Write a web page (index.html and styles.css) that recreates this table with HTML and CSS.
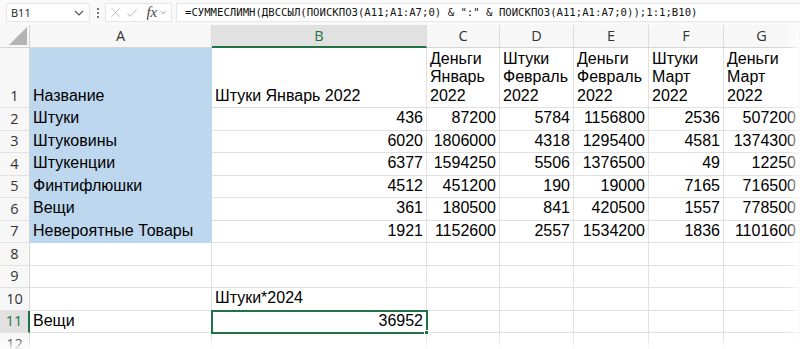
FILE: index.html
```html
<!DOCTYPE html>
<html lang="ru">
<head>
<meta charset="utf-8">
<title>Excel</title>
<link rel="stylesheet" href="styles.css">
</head>
<body>
<div class="app">
  <div class="fbar">
    <div class="namebox">
      <span class="nb-text">B11</span>
      <svg class="chev" width="10" height="6" viewBox="0 0 10 6"><path d="M1 1 L5 5 L9 1" fill="none" stroke="#555" stroke-width="1.2"/></svg>
    </div>
    <div class="dots"><span></span><span></span><span></span></div>
    <div class="fnbox">
      <svg class="ico-x" width="11" height="11" viewBox="0 0 11 11"><path d="M0.5 0.5 L10.5 10.5 M10.5 0.5 L0.5 10.5" stroke="#b5b5b5" stroke-width="1.1" fill="none"/></svg>
      <svg class="ico-ok" width="12" height="10" viewBox="0 0 12 10"><path d="M0.5 5.5 L4 9 L11.5 0.5" stroke="#b5b5b5" stroke-width="1.1" fill="none"/></svg>
      <span class="fx">fx</span>
      <svg class="chev small" width="8" height="5" viewBox="0 0 8 5"><path d="M1 1 L4 4 L7 1" fill="none" stroke="#888" stroke-width="1"/></svg>
    </div>
    <div class="formula">=СУММЕСЛИМН(ДВССЫЛ(ПОИСКПОЗ(A11;A1:A7;0) &amp; ":" &amp; ПОИСКПОЗ(A11;A1:A7;0));1:1;B10)</div>
  </div>

  <div class="sheet">
    <div class="corner"><svg width="18" height="18" viewBox="0 0 18 18"><path d="M18 0 L18 18 L0 18 Z" fill="#b4b4b4"/></svg></div>
    <div class="ch">A</div>
    <div class="ch sel">B</div>
    <div class="ch">C</div>
    <div class="ch">D</div>
    <div class="ch">E</div>
    <div class="ch">F</div>
    <div class="ch">G</div>

    <div class="rh tall">1</div>
    <div class="c blue">Название</div>
    <div class="c">Штуки Январь 2022</div>
    <div class="c wrap">Деньги Январь 2022</div>
    <div class="c wrap">Штуки Февраль 2022</div>
    <div class="c wrap">Деньги Февраль 2022</div>
    <div class="c wrap">Штуки Март 2022</div>
    <div class="c wrap">Деньги Март 2022</div>

    <div class="rh">2</div>
    <div class="c blue">Штуки</div>
    <div class="c n">436</div><div class="c n">87200</div><div class="c n">5784</div><div class="c n">1156800</div><div class="c n">2536</div><div class="c n">507200</div>

    <div class="rh">3</div>
    <div class="c blue">Штуковины</div>
    <div class="c n">6020</div><div class="c n">1806000</div><div class="c n">4318</div><div class="c n">1295400</div><div class="c n">4581</div><div class="c n">1374300</div>

    <div class="rh">4</div>
    <div class="c blue">Штукенции</div>
    <div class="c n">6377</div><div class="c n">1594250</div><div class="c n">5506</div><div class="c n">1376500</div><div class="c n">49</div><div class="c n">12250</div>

    <div class="rh">5</div>
    <div class="c blue">Финтифлюшки</div>
    <div class="c n">4512</div><div class="c n">451200</div><div class="c n">190</div><div class="c n">19000</div><div class="c n">7165</div><div class="c n">716500</div>

    <div class="rh">6</div>
    <div class="c blue">Вещи</div>
    <div class="c n">361</div><div class="c n">180500</div><div class="c n">841</div><div class="c n">420500</div><div class="c n">1557</div><div class="c n">778500</div>

    <div class="rh">7</div>
    <div class="c blue">Невероятные Товары</div>
    <div class="c n">1921</div><div class="c n">1152600</div><div class="c n">2557</div><div class="c n">1534200</div><div class="c n">1836</div><div class="c n">1101600</div>

    <div class="rh">8</div>
    <div class="c"></div><div class="c"></div><div class="c"></div><div class="c"></div><div class="c"></div><div class="c"></div><div class="c"></div>

    <div class="rh">9</div>
    <div class="c"></div><div class="c"></div><div class="c"></div><div class="c"></div><div class="c"></div><div class="c"></div><div class="c"></div>

    <div class="rh">10</div>
    <div class="c"></div><div class="c">Штуки*2024</div><div class="c"></div><div class="c"></div><div class="c"></div><div class="c"></div><div class="c"></div>

    <div class="rh sel">11</div>
    <div class="c">Вещи</div><div class="c n active">36952<span class="handle"></span></div><div class="c"></div><div class="c"></div><div class="c"></div><div class="c"></div><div class="c"></div>

    <div class="rh">12</div>
    <div class="c"></div><div class="c"></div><div class="c"></div><div class="c"></div><div class="c"></div><div class="c"></div><div class="c"></div>
  </div>
  <div class="fade-right"></div>
  <div class="fade-bottom"></div>
</div>
</body>
</html>
```

FILE: styles.css
```css
* { box-sizing: border-box; }
html, body { margin: 0; padding: 0; background: #fff; }
.app {
  position: relative;
  width: 800px;
  height: 349px;
  overflow: hidden;
  background: #fff;
}

/* formula bar */
.fbar {
  height: 25px;
  display: flex;
  align-items: center;
  padding: 2px 0 2px 6px;
  background: #f9f9f9;
}
.namebox {
  width: 84px;
  height: 19px;
  background: #fff;
  border: 1px solid #e6e6e6;
  display: flex;
  align-items: center;
  justify-content: space-between;
  padding: 0 5px 0 4px;
  font-family: "Open Sans", "Noto Sans", sans-serif;
  font-size: 11px;
  color: #222;
}
.chev { display: block; }
.dots {
  width: 15px;
  display: flex;
  flex-direction: column;
  align-items: center;
  gap: 2px;
}
.dots span { width: 2px; height: 2px; background: #777; display: block; }
.fnbox {
  width: 67px;
  height: 19px;
  background: #fff;
  border: 1px solid #e6e6e6;
  display: flex;
  align-items: center;
  padding: 0 4px 0 5px;
  gap: 7px;
}
.ico-x, .ico-ok { display: block; }
.fx {
  font-family: "Liberation Serif", "DejaVu Serif", serif;
  font-style: italic;
  font-size: 15px;
  color: #444;
  line-height: 1;
  margin-left: 2px;
}
.chev.small { margin-left: -4px; }
.formula {
  flex: 1;
  margin-left: 4px;
  height: 19px;
  background: #fff;
  border: 1px solid #e6e6e6;
  border-right: none;
  padding: 0 0 0 8px;
  font-family: "DejaVu Sans Mono", "Liberation Mono", monospace;
  font-size: 10.65px;
  line-height: 17px;
  color: #111;
  white-space: nowrap;
}

/* sheet */
.sheet {
  display: grid;
  grid-template-columns: 30px 182px 215px 73px 74px 75px 75px 76px;
  grid-template-rows: 23px 60px repeat(11, 22.5px);
  font-family: "Liberation Sans", Arial, sans-serif;
  font-size: 16px;
  color: #000;
}
.corner {
  background: #f7f7f7;
  border-right: 1px solid #d4d4d4;
  border-bottom: 1px solid #d4d4d4;
  display: flex;
  align-items: flex-end;
  justify-content: flex-end;
  padding: 0 2px 2px 0;
}
.corner svg { display: block; }
.ch {
  background: #f7f7f7;
  border-right: 1px solid #dcdcdc;
  border-bottom: 1px solid #d4d4d4;
  text-align: center;
  font-family: "Open Sans", "Noto Sans", sans-serif;
  font-size: 14.5px;
  line-height: 22px;
  color: #333;
}
.ch.sel {
  background: #e1e1e1;
  color: #217346;
  border-bottom: 2px solid #217346;
}
.rh {
  background: #f7f7f7;
  border-right: 1px solid #d4d4d4;
  border-bottom: 1px solid #e1e1e1;
  font-family: "Open Sans", "Noto Sans", sans-serif;
  font-size: 14.5px;
  display: flex;
  align-items: flex-end;
  justify-content: center;
  line-height: 20px;
  padding-bottom: 1px;
  color: #333;
}
.rh.sel {
  background: #e1e1e1;
  color: #217346;
  border-right: 2px solid #217346;
}
.c {
  position: relative;
  border-right: 1px solid #e1e1e1;
  border-bottom: 1px solid #e1e1e1;
  display: flex;
  align-items: flex-end;
  padding: 0 3px 2px 3px;
  line-height: 18.5px;
  white-space: nowrap;
}
.c.wrap { white-space: normal; }
.c.n { justify-content: flex-end; }
.c.blue {
  background: #bdd7ee;
  border-right-color: #bdd7ee;
  border-bottom-color: #bdd7ee;
}
.c.active {
  outline: 2px solid #217346;
  outline-offset: -1px;
  z-index: 2;
}
.handle {
  position: absolute;
  right: -3px;
  bottom: -3px;
  width: 5px;
  height: 5px;
  background: #217346;
  border: 1px solid #fff;
}
.fade-right {
  position: absolute;
  top: 25px;
  right: 0;
  width: 14px;
  bottom: 0;
  background: linear-gradient(to right, rgba(255,255,255,0), rgba(255,255,255,0.85));
}
.fade-bottom {
  position: absolute;
  left: 0;
  right: 0;
  bottom: 0;
  height: 12px;
  background: linear-gradient(to bottom, rgba(255,255,255,0), rgba(255,255,255,0.9));
}
```
